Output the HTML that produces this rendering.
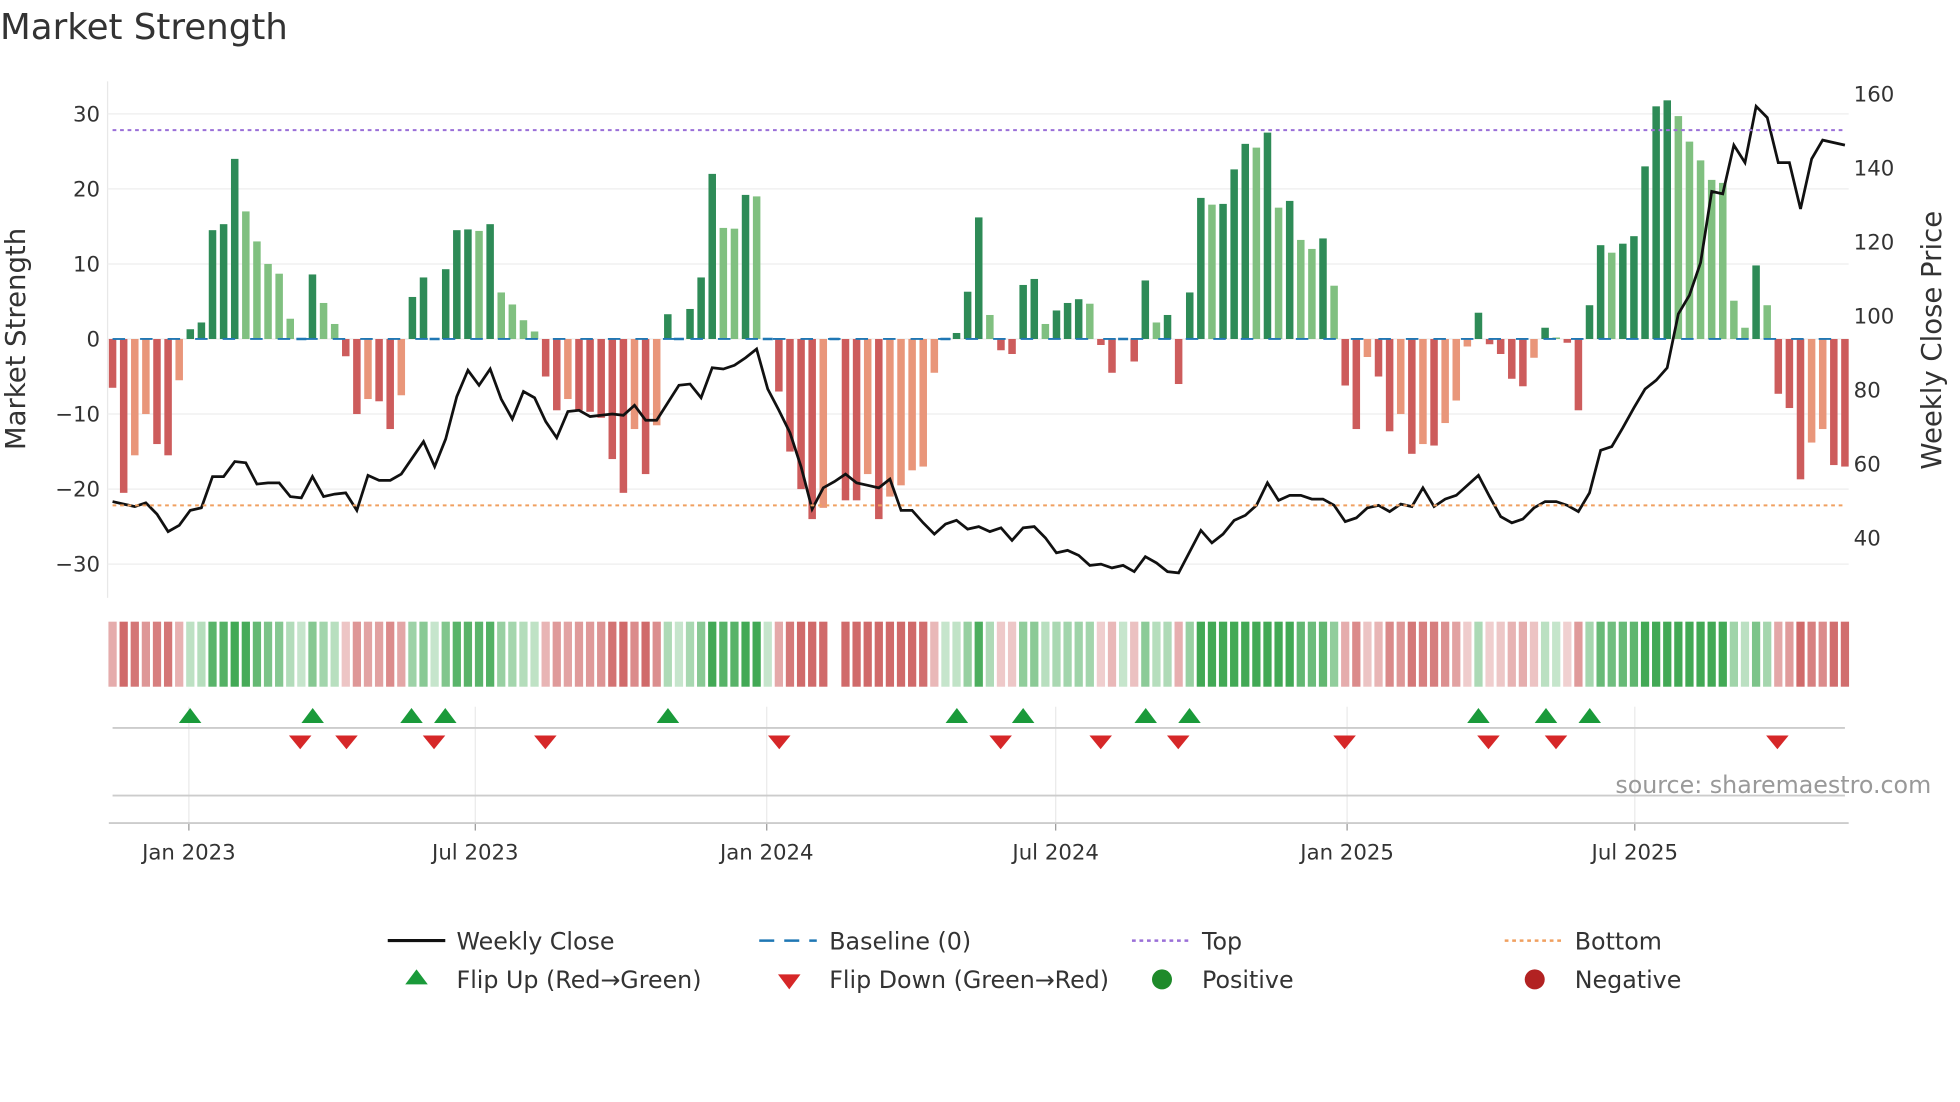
<!DOCTYPE html>
<html><head><meta charset="utf-8"><style>html,body{margin:0;padding:0;background:#fff}svg{display:block}text{font-family:"DejaVu Sans","Liberation Sans",sans-serif}</style></head>
<body>
<svg id="s" width="1960" height="1102" viewBox="0 0 1567 881" xmlns="http://www.w3.org/2000/svg">
<rect width="1567" height="881" fill="#fff"/>
<text x="0" y="31" font-size="28.5" fill="#333">Market Strength</text>
<g id="grid"></g>
<g id="bars"></g>
<g id="strip"></g>
<g id="mk"></g>
<polyline id="price" fill="none" stroke="#111" stroke-width="2.2"/>
<line x1="90" x2="1475" y1="104" y2="104" stroke="#9a6fd8" stroke-width="1.6" stroke-dasharray="3,3"/>
<line x1="90" x2="1475" y1="404" y2="404" stroke="#f0a060" stroke-width="1.6" stroke-dasharray="3,3"/>
<text x="20" y="271" font-size="22" fill="#333" text-anchor="middle" transform="rotate(-90 20 271)">Market Strength</text>
<text x="1552" y="272" font-size="22" fill="#333" text-anchor="middle" transform="rotate(-90 1552 272)">Weekly Close Price</text>
<text x="1544" y="634" font-size="19" fill="#999" text-anchor="end">source: sharemaestro.com</text>
<g font-size="19" fill="#333">
<line x1="310" x2="356" y1="752" y2="752" stroke="#111" stroke-width="2.5"/><text x="365" y="759">Weekly Close</text>
<line x1="607" x2="653" y1="752" y2="752" stroke="#1f77b4" stroke-width="2" stroke-dasharray="12,8"/><text x="663" y="759">Baseline (0)</text>
<line x1="905" x2="951" y1="752" y2="752" stroke="#9a6fd8" stroke-width="2" stroke-dasharray="3,3"/><text x="961" y="759">Top</text>
<line x1="1203" x2="1249" y1="752" y2="752" stroke="#f0a060" stroke-width="2" stroke-dasharray="3,3"/><text x="1259" y="759">Bottom</text>
<polygon points="333,775 324,787 342,787" fill="#1a9a3a"/><text x="365" y="790">Flip Up (Red→Green)</text>
<polygon points="622,779 640,779 631,791" fill="#d62728"/><text x="663" y="790">Flip Down (Green→Red)</text>
<circle cx="929" cy="783" r="8" fill="#1e8a2a"/><text x="961" y="790">Positive</text>
<circle cx="1227" cy="783" r="8" fill="#b22222"/><text x="1259" y="790">Negative</text>
</g>
</svg>
<script>
const NS="http://www.w3.org/2000/svg";
function el(p,t,a,txt){const e=document.createElementNS(NS,t);for(const k in a)e.setAttribute(k,a[k]);if(txt!=null)e.textContent=txt;p.appendChild(e);return e;}
const g=document.getElementById('grid');
el(g,'line',{x1:86,x2:86,y1:65,y2:478,stroke:'#e8e8e8'});
[30,20,10,0,-10,-20,-30].forEach(v=>{const y=271-v*6;el(g,'line',{x1:86,x2:1478,y1:y,y2:y,stroke:'#eeeeee'});el(g,'text',{x:80,y:y+6,'font-size':17,fill:'#333','text-anchor':'end'},v<0?'\u2212'+(-v):''+v);});
[160,140,120,100,80,60,40].forEach(p=>{const y=75+(160-p)*2.958;el(g,'text',{x:1482,y:y+6,'font-size':17,fill:'#333'},''+p);});
[[151,'Jan 2023'],[380,'Jul 2023'],[613,'Jan 2024'],[844,'Jul 2024'],[1077,'Jan 2025'],[1307,'Jul 2025']].forEach(([x,t])=>{el(g,'line',{x1:x,x2:x,y1:565,y2:658,stroke:'#eaeaea'});el(g,'line',{x1:x,x2:x,y1:658,y2:664,stroke:'#999'});el(g,'text',{x:x,y:687,'font-size':17,fill:'#333','text-anchor':'middle'},t);});
el(g,'line',{x1:90,x2:1475,y1:582,y2:582,stroke:'#ccc','stroke-width':1.5});
el(g,'line',{x1:90,x2:1475,y1:636,y2:636,stroke:'#ccc','stroke-width':1.5});
el(g,'line',{x1:87,x2:1478,y1:658,y2:658,stroke:'#ccc','stroke-width':1.5});
const V=[-6.5,-20.5,-15.5,-10,-14,-15.5,-5.5,1.3,2.2,14.5,15.3,24,17,13,10,8.7,2.7,0,8.6,4.8,2,-2.3,-10,-8,-8.3,-12,-7.5,5.6,8.2,0,9.3,14.5,14.6,14.4,15.3,6.2,4.6,2.5,1,-5,-9.5,-8,-9.5,-9.7,-10.5,-16,-20.5,-12,-18,-11.5,3.3,0,4,8.2,22,14.8,14.7,19.2,19,0,-7,-15,-20,-24,-22.5,0,-21.5,-21.5,-18,-24,-21,-19.5,-17.5,-17,-4.5,0,0.8,6.3,16.2,3.2,-1.5,-2,7.2,8,2,3.8,4.8,5.3,4.7,-0.8,-4.5,0,-3,7.8,2.2,3.2,-6,6.2,18.8,17.9,18,22.6,26,25.5,27.5,17.5,18.4,13.2,12,13.4,7.1,-6.2,-12,-2.4,-5,-12.3,-10,-15.3,-14,-14.2,-11.2,-8.2,-1,3.5,-0.7,-2,-5.3,-6.3,-2.5,1.5,0.2,-0.5,-9.5,4.5,12.5,11.5,12.7,13.7,23,31,31.8,29.7,26.3,23.8,21.2,20.8,5.1,1.5,9.8,4.5,-7.3,-9.2,-18.7,-13.8,-12,-16.8,-17];
const B=document.getElementById('bars'),S=document.getElementById('strip');
const dx=(1475-90)/(V.length-1);
V.forEach((v,i)=>{const x=90+i*dx,p=i?V[i-1]:0;let c;
 if(v>=0)c=v>=p?'#2e8b57':'#80c080';else c=v<=p?'#cd5c5c':'#e9967a';
 if(v!==0){const y=v>0?271-v*6:271;el(B,'rect',{x:x-3,y:y,width:6,height:Math.abs(v)*6,fill:c});}
 else el(B,'line',{x1:x-4,x2:x+4,y1:271,y2:271,stroke:'#1f77b4','stroke-width':2});
 if(i==65)return;
 const a=Math.min(1,0.3+Math.abs(v)/25);
 const sc=v>=0?`rgba(46,160,67,${a*0.9})`:`rgba(200,80,80,${a*0.85})`;
 el(S,'rect',{x:x-3.3,y:497,width:6.6,height:52,fill:sc});
});
el(B,'line',{x1:90,x2:1475,y1:271,y2:271,stroke:'#1f77b4','stroke-width':1.5,'stroke-dasharray':'10,12'});
const P=[401,403,405,402,411,425,420,408,406,381,381,369,370,387,386,386,397,398,381,397,395,394,408,380,384,384,379,366,353,373,351,317,296,308,295,319,335,313,318,337,350,329,328,333,332,331,332,324,336,336,322,308,307,318,294,295,292,286,279,311,328,346,373,407,390,385,379,386,388,390,383,408,408,418,427,419,416,423,421,425,422,432,422,421,430,442,440,444,452,451,454,452,457,445,450,457,458,441,424,434,427,416,412,404,386,400,396,396,399,399,404,417,414,406,404,409,403,405,390,405,399,396,388,380,397,413,418,415,406,401,401,404,409,394,360,357,342,326,311,304,294,251,236,210,153,155,116,130,85,94,130,130,167,127,112,114,116];
document.getElementById('price').setAttribute('points',P.map((y,i)=>(90+i*dx).toFixed(1)+','+y).join(' '));
const M=document.getElementById('mk');
[152,250,329,356,534,765,818,916,951,1182,1236,1271].forEach(x=>el(M,'polygon',{points:`${x},566 ${x-9},578 ${x+9},578`,fill:'#1a9a3a'}));
[240,277,347,436,623,800,880,942,1075,1190,1244,1421].forEach(x=>el(M,'polygon',{points:`${x-9},588 ${x+9},588 ${x},599`,fill:'#d62728'}));
</script>
</body></html>
